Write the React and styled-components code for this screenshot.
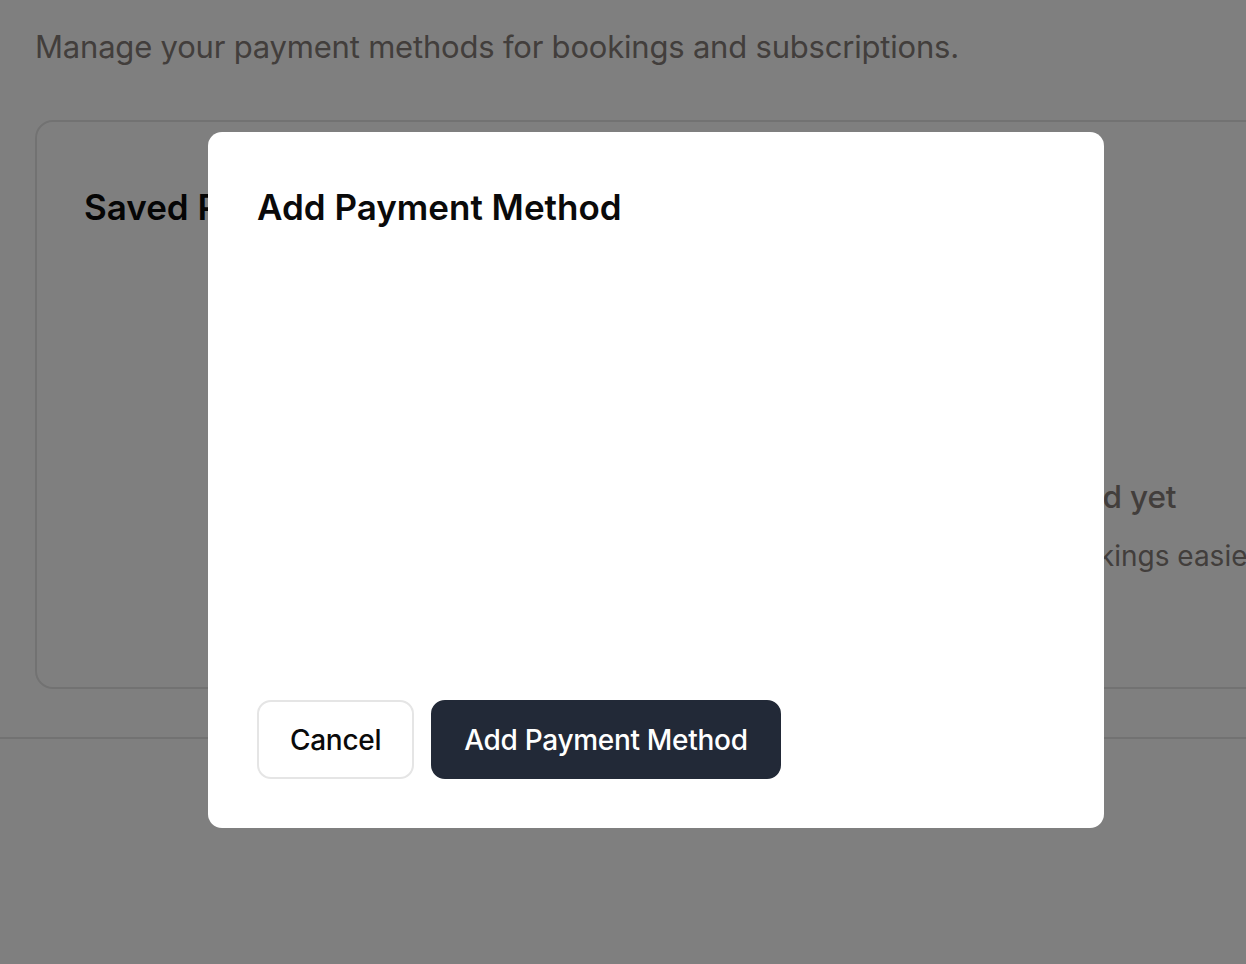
import React from "react";
import styled, { createGlobalStyle } from "styled-components";
import { CreditCard } from "lucide-react";

const GlobalStyle = createGlobalStyle`
    html, body {
        margin: 0;
        padding: 0;
        overflow: hidden;
        background: #ffffff;
        font-family: Inter, "Noto Sans", "Liberation Sans", sans-serif;
        -webkit-font-smoothing: antialiased;
    }
`

const Page = styled.div`
    width: 1882px;
    height: 964px;
    display: flex;
    flex-direction: column;
`
const Main = styled.main`
    padding: 0 35px;
    display: flex;
    flex-direction: column;
`
const Header = styled.header`
    margin-top: -64px;
    display: flex;
    flex-direction: column;
    gap: 26px;
`
const PageTitle = styled.h1`
    margin: 0;
    font-size: 52px;
    line-height: 63px;
    font-weight: 700;
    color: #0a0a0a;
`
const Subtitle = styled.p`
    margin: 0;
    font-size: 31px;
    line-height: 44px;
    letter-spacing: -0.2px;
    color: #857d78;
`
const Card = styled.section`
    margin-top: 51px;
    border: 2px solid #e5e5e5;
    border-radius: 18px;
    padding: 61px 48px 110px 47px;
    display: flex;
    flex-direction: column;
`
const CardTitle = styled.h2`
    margin: 0;
    font-size: 35px;
    line-height: 49px;
    font-weight: 600;
    color: #0a0a0a;
`
const EmptyState = styled.div`
    margin-top: 128px;
    padding-right: 4px;
    display: flex;
    flex-direction: column;
    align-items: center;
    color: #857d78;
`
const EmptyIcon = styled.div`
    width: 84px;
    height: 84px;
    margin-bottom: 28px;
    display: flex;
    align-items: center;
    justify-content: center;
    color: #a8a29e;
`
const EmptyTitle = styled.p`
    margin: 0;
    font-size: 31.5px;
    line-height: 49px;
    font-weight: 500;
    letter-spacing: -0.2px;
    color: #857d78;
`
const EmptyText = styled.p`
    margin: 14px 0 0;
    font-size: 28px;
    line-height: 42px;
    color: #857d78;
`
const Footer = styled.footer`
    margin-top: 48px;
    border-top: 2px solid #e5e5e5;
    flex: 1;
`

const Overlay = styled.div`
    position: fixed;
    inset: 0;
    background: rgba(0, 0, 0, 0.5);
    display: flex;
    align-items: center;
    justify-content: center;
    padding: 0 0 4px 66px;
`
const Dialog = styled.div`
    width: 896px;
    box-sizing: border-box;
    background: #ffffff;
    border-radius: 14px;
    padding: 51px 49px 49px;
    display: flex;
    flex-direction: column;
`
const DialogTitle = styled.h2`
    margin: 0;
    font-size: 35px;
    line-height: 49px;
    font-weight: 600;
    color: #0a0a0a;
`
const DialogBody = styled.div`
    height: 468px;
`
const Actions = styled.div`
    display: flex;
    gap: 17px;
`
const Button = styled.button`
    height: 79px;
    box-sizing: border-box;
    padding: 0 31px;
    border-radius: 14px;
    font-family: inherit;
    font-size: 28px;
    font-weight: 500;
    letter-spacing: -0.3px;
    cursor: pointer;
    border: 2px solid ${p => p.$primary ? "#222937" : "#e5e5e5"};
    background: ${p => p.$primary ? "#222937" : "#ffffff"};
    color: ${p => p.$primary ? "#ffffff" : "#0a0a0a"};
`

export default function App() {
    return (
        <>
            <GlobalStyle />
            <Page>
                <Main>
                    <Header>
                        <PageTitle>Payment Methods</PageTitle>
                        <Subtitle>Manage your payment methods for bookings and subscriptions.</Subtitle>
                    </Header>
                    <Card>
                        <CardTitle>Saved Payment Methods</CardTitle>
                        <EmptyState>
                            <EmptyIcon><CreditCard size={84} strokeWidth={1.5} /></EmptyIcon>
                            <EmptyTitle>No payment methods added yet</EmptyTitle>
                            <EmptyText>Add a payment method to make bookings easier</EmptyText>
                        </EmptyState>
                    </Card>
                </Main>
                <Footer />
            </Page>
            <Overlay>
                <Dialog role="dialog">
                    <DialogTitle>Add Payment Method</DialogTitle>
                    <DialogBody />
                    <Actions>
                        <Button>Cancel</Button>
                        <Button $primary>Add Payment Method</Button>
                    </Actions>
                </Dialog>
            </Overlay>
        </>
    )
}
